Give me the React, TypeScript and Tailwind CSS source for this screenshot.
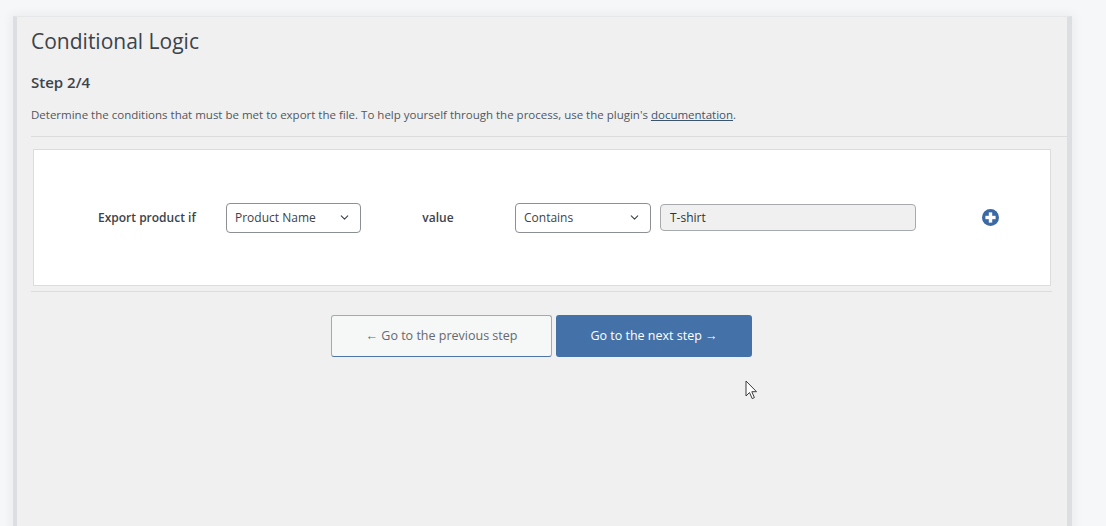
import { ChevronDown } from 'lucide-react';

const font = { fontFamily: '"Open Sans", "Noto Sans", sans-serif' };

function Select({ label, width }: { label: string; width: string }) {
  return (
    <div
      className={`flex h-[30px] ${width} items-center justify-between rounded-[4px] border border-[#8c8f94] bg-white pl-[8px] pr-[9px] text-[12px] text-[#3c434a]`}
    >
      <span>{label}</span>
      <ChevronDown className="h-[13px] w-[13px] text-[#3c434a]" strokeWidth={2} />
    </div>
  );
}

function PlusIcon() {
  return (
    <svg width="17" height="17" viewBox="0 0 16 16">
      <circle cx="8" cy="8" r="8" fill="#3a69a4" />
      <rect x="6.4" y="3.2" width="3.2" height="9.6" fill="#fff" />
      <rect x="3.2" y="6.4" width="9.6" height="3.2" fill="#fff" />
    </svg>
  );
}

function Cursor() {
  return (
    <svg width="14" height="21" viewBox="0 0 14 21" className="absolute left-[745px] top-[380px]">
      <path
        d="M1 1 L1 16 L4.5 12.5 L7.2 18.6 L9.4 17.6 L6.8 11.7 L11.5 11.7 Z"
        fill="#fff"
        stroke="#3c3c3c"
        strokeWidth="1"
        strokeLinejoin="round"
      />
    </svg>
  );
}

export default function App() {
  return (
    <div className="relative h-[526px] overflow-hidden bg-[#f6f7f8] pl-[13px] pt-[16px]" style={font}>
      <div className="h-[520px] w-[1059px] border-l-4 border-r-[5px] border-t border-[#dcdee1] border-t-[#e6e7e9] bg-[#f0f0f1] pt-[10px] shadow-[0_0_10px_2px_rgba(0,0,0,0.05)]">
        <div className="pl-[14px]">
          <h1 className="h-[28px] text-[21px] font-normal leading-[28px] text-[#3c434a]">Conditional Logic</h1>
          <h2 className="mt-[17px] h-[20px] text-[15px] font-semibold leading-[20px] text-[#3c434a]">Step 2/4</h2>
          <p className="mt-[15px] h-[16px] text-[11.5px] leading-[16px] text-[#50575e]">
            Determine the conditions that must be met to export the file. To help yourself through the process, use
            the plugin's{' '}
            <a className="text-[#3b556f] underline" href="#">
              documentation
            </a>
            .
          </p>
          <div className="mt-[13px] h-px bg-[#dcdcde]" />

          <div className="ml-[2px] mt-[12px] flex h-[137px] w-[1018px] items-center border border-[#dcdcde] bg-white pl-[64px]">
            <span className="w-[128px] text-[12px] font-semibold text-[#3c434a]">Export product if</span>
            <Select label="Product Name" width="w-[135px]" />
            <span className="w-[154px] text-center text-[12px] font-semibold text-[#3c434a]">value</span>
            <Select label="Contains" width="w-[136px]" />
            <div className="ml-[9px] flex h-[27px] w-[256px] items-center rounded-[4px] border border-[#a7aaad] bg-[#f0f0f1] pl-[9px] text-[12px] text-[#2c3338]">
              T-shirt
            </div>
            <div className="ml-[66px]">
              <PlusIcon />
            </div>
          </div>
          <div className="mt-[5px] h-px w-[1021px] bg-[#dcdcde]" />

          <div className="mt-[23px] flex w-[1021px] justify-center gap-[4px]">
            <button className="h-[42px] w-[221px] rounded-[3px] border border-[#a7aaad] border-b-[#4f75a6] bg-[#f6f7f7] text-[12.5px] text-[#646970]">
              ← Go to the previous step
            </button>
            <button className="h-[42px] w-[196px] rounded-[3px] bg-[#4472a8] text-[12.5px] text-white">
              Go to the next step →
            </button>
          </div>
        </div>
      </div>
      <Cursor />
    </div>
  );
}
